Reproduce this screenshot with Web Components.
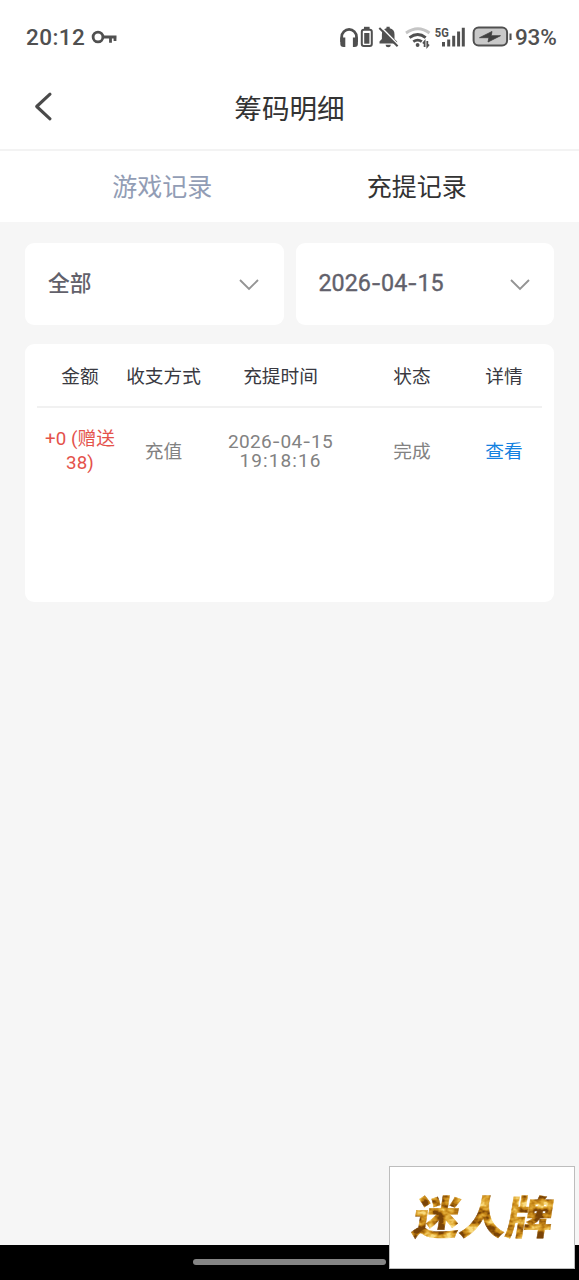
<!DOCTYPE html>
<html lang="zh-CN">
<head>
<meta charset="utf-8">
<title>筹码明细</title>
<style>
html,body{margin:0;height:100%}
body{background:#f6f6f6;font-family:Roboto,"Noto Sans CJK SC",sans-serif}
</style>
</head>
<body>
<chip-app></chip-app>
<script>
const define = (name, html) => customElements.define(name, class extends HTMLElement {
  constructor() {
    super();
    const t = document.createElement('template');
    t.innerHTML = html;
    this.attachShadow({mode: 'open'}).append(t.content.cloneNode(true));
  }
});

define('status-bar', `
<style>
:host{display:flex;height:74px;box-sizing:border-box;padding:0 22px 0 26px;align-items:center;color:#505050;font-size:22.5px;font-weight:500;line-height:26px}
.time{letter-spacing:.4px;width:65px}
.gap{flex:1}
svg{display:block;flex:none}
.pct{width:42px;white-space:nowrap;letter-spacing:-.2px}
</style>
<span class="time">20:12</span>
<svg width="28" height="20" viewBox="0 0 28 20" fill="none" stroke="#505050" stroke-width="2.8"><circle cx="7" cy="10" r="4.9"/><path d="M12 10H25.5M19.5 10v5.7M24 10v4"/></svg>
<span class="gap"></span>
<svg width="176" height="30" viewBox="339 22 176 30" fill="none" stroke="#505050">
  <path d="M341.7 42v-5a7.4 7.6 0 0 1 14.8 0v5" stroke-width="2.8"/>
  <path d="M340.3 37.5h5v9.5h-1.7q-3.3 0-3.3-3zM352.9 37.5h5v6.5q0 3-3.3 3h-1.7z" fill="#505050" stroke="none"/>
  <rect x="361.8" y="29.7" width="10" height="16.3" rx="2" stroke-width="2"/><path d="M364 28h5.6" stroke-width="2.4"/><path d="M364.2 33h5.2v10.7h-5.2z" fill="#505050" stroke="none"/>
  <path d="M379.5 43.4v-1.8l2.4-2.6v-4.5q0-5.2 4.6-6.2v-1.5h3.2v1.5q4.8 1 4.8 6.2V39l2.6 2.6v1.8zM385.5 44.7h5.4q-.3 2.5-2.7 2.5t-2.7-2.5z" fill="#505050" stroke="none"/>
  <path d="M381.2 27.3l17.2 17.5" stroke="#fff" stroke-width="1.6"/><path d="M379.3 28l18.3 18.2" stroke-width="2"/>
  <path d="M406 33q12-8.5 23.5 0" stroke="#c5c5c5" stroke-width="2.8"/>
  <path d="M409.5 37.6q8.3-6.3 16.2 0M413.3 41.7q4.5-3.2 8.5 0" stroke-width="2.8"/><circle cx="417.6" cy="45" r="1.9" fill="#505050" stroke="none"/>
  <path d="M424.6 47v-5.5l-1.7 2M427.3 41v5.5l1.7-2" stroke-width="1.8"/>
  <path d="M443.5 42v4.5M448.7 39.4v7.1M453.7 35.8v10.7M458.6 31.5v15M463.3 27.7v18.8" stroke-width="3"/>
  <text x="434.8" y="37" fill="#505050" stroke="none" font-size="13" font-weight="700" textLength="14" lengthAdjust="spacingAndGlyphs">5G</text>
  <rect x="473.6" y="27.6" width="33.5" height="18" rx="5" fill="#c9c9c9" stroke-width="2"/>
  <path d="M479.5 37.7l12.5-6.2-.8 4.2h9.3L488 42l.9-4.3z" fill="#404040" stroke="#404040" stroke-width=".8"/><path d="M510.5 33.5v6.5" stroke-width="2.1"/>
</svg>
<span class="pct">93%</span>`);

define('nav-header', `
<style>
:host{display:grid;grid-template-columns:90px 1fr 90px;align-items:center;height:75px;border-bottom:2px solid #f3f3f3;box-sizing:content-box}
h1{margin:0;text-align:center;font-size:27.6px;line-height:40px;font-weight:400;color:#333;padding-bottom:4px}
svg{display:block;margin:0 0 12px 32px}
</style>
<svg width="24" height="32" viewBox="0 0 24 32" fill="none" stroke="#4a4a4a" stroke-width="3.1" stroke-linecap="round" stroke-linejoin="round"><path d="M18 4.2L4.7 16.5 18 28.8"/></svg>
<h1><slot></slot></h1><span></span>`);

define('tab-bar', `
<style>:host{display:grid;grid-template-columns:1fr 1fr;gap:0;padding:2px 35px 0;height:69px;align-items:center}</style><slot></slot>`);
define('tab-item', `
<style>:host{display:block;text-align:center;font-size:25px;line-height:36px;color:#929db5}:host([active]){color:#333}</style><slot></slot>`);

define('select-box', `
<style>
:host{display:flex;align-items:center;justify-content:space-between;box-sizing:border-box;height:82px;padding:0 24px 0 23px;background:#fff;border-radius:9px;color:#62616b;font-size:21.7px;line-height:32px;font-weight:500}
:host([date]){padding-bottom:2px;padding-right:23px;font-size:23.3px;letter-spacing:.02px;font-weight:400;-webkit-text-stroke:.35px #62616b}
:host([date]) svg{margin-top:4px}
::slotted(i){font-style:normal;font-family:Inter;font-size:22px;}
svg{margin-top:2px}
</style>
<span><slot></slot></span>
<svg width="22" height="14" viewBox="0 0 22 14" fill="none" stroke="#949494" stroke-width="1.9"><path d="M2 2l9 9 9-9"/></svg>`);

define('record-table', `
<style>
:host{display:block;box-sizing:border-box;height:258px;background:#fff;border-radius:9px;padding:0 12px;font-size:18.7px}
.row{display:grid;grid-template-columns:86px 81px 153px 110px 74px;align-items:center;text-align:center}
.head{box-sizing:content-box;height:58px;padding-top:4px;border-bottom:2px solid #f1f1f1;color:#393941;line-height:28px}
.body{height:86px;color:#828282;line-height:28px}
.body ::slotted(*){display:block}
.body ::slotted(span),.body ::slotted(view-link){padding-top:2px}
</style>
<div class="row head"><slot name="head"></slot></div>
<div class="row body"><slot></slot></div>`);
define('amount-cell', `<style>:host{line-height:24px;color:#e4524b;letter-spacing:.1px;padding-bottom:1px}</style><slot></slot>`);
define('time-cell', `<style>:host{line-height:19.5px;font-size:19px;letter-spacing:.3px}::slotted(i){font-style:normal;font-family:Inter;font-size:18px;line-height:1px}::slotted(b){font-weight:400;letter-spacing:1.1px}</style><slot></slot>`);
define('view-link', `<style>:host{color:#1481e0}</style><slot></slot>`);

define('home-bar', `
<style>:host{display:flex;height:35px;box-sizing:border-box;padding-bottom:1px;background:#000;justify-content:center;align-items:center}i{width:193px;height:6px;border-radius:3px;background:#858585}</style><i></i>`);

define('brand-mark', `
<style>
:host{position:absolute;left:389px;top:1166px;width:186px;height:103px;box-sizing:border-box;border:1px solid #bdbdbd;background:#fff}
svg{display:block}
text{font-family:"Noto Sans CJK SC",sans-serif;font-weight:900;font-size:45px}
</style>
<svg width="184" height="101" viewBox="0 0 184 101">
<defs>
<filter id="foil" x="-5%" y="-10%" width="110%" height="120%" color-interpolation-filters="sRGB">
<feTurbulence type="fractalNoise" baseFrequency=".09 .12" numOctaves="3" seed="8"/>
<feColorMatrix values="2.4 0 0 0 -.8  2.4 0 0 0 -.8  2.4 0 0 0 -.8  0 0 0 0 1"/>
<feComponentTransfer><feFuncR type="table" tableValues=".48 .7 .82 .9 .98"/><feFuncG type="table" tableValues=".27 .45 .58 .7 .86"/><feFuncB type="table" tableValues=".03 .06 .13 .25 .5"/></feComponentTransfer>
<feComposite in2="SourceAlpha" operator="in"/>
</filter></defs>
<g filter="url(#foil)"><text transform="translate(21 67) skewX(-9)" x="0" y="0" textLength="140" lengthAdjust="spacingAndGlyphs" stroke="#000" stroke-width=".5">迷人牌</text></g>
</svg>`);

define('chip-app', `
<style>
:host{display:flex;flex-direction:column;position:relative;width:100%;height:1280px;overflow:hidden;background:#f6f6f6}
.top{background:#fff;height:222px}
main{flex:1;padding:21px 25px 0}
.filters{display:grid;grid-template-columns:1fr 1fr;gap:12px;margin-bottom:19px}
</style>
<div class="top">
<status-bar></status-bar>
<nav-header>筹码明细</nav-header>
<tab-bar><tab-item>游戏记录</tab-item><tab-item active>充提记录</tab-item></tab-bar>
</div>
<main>
<div class="filters"><select-box>全部</select-box><select-box date>2026<i>-</i>04<i>-</i>15</select-box></div>
<record-table>
<span slot="head">金额</span><span slot="head">收支方式</span><span slot="head">充提时间</span><span slot="head">状态</span><span slot="head">详情</span>
<amount-cell>+0 (赠送<br>38)</amount-cell><span>充值</span><time-cell>2026<i>-</i>04<i>-</i>15<br><b>19:18:16</b></time-cell><span>完成</span><view-link>查看</view-link>
</record-table>
</main>
<home-bar></home-bar>
<brand-mark></brand-mark>`);
</script>
</body>
</html>
